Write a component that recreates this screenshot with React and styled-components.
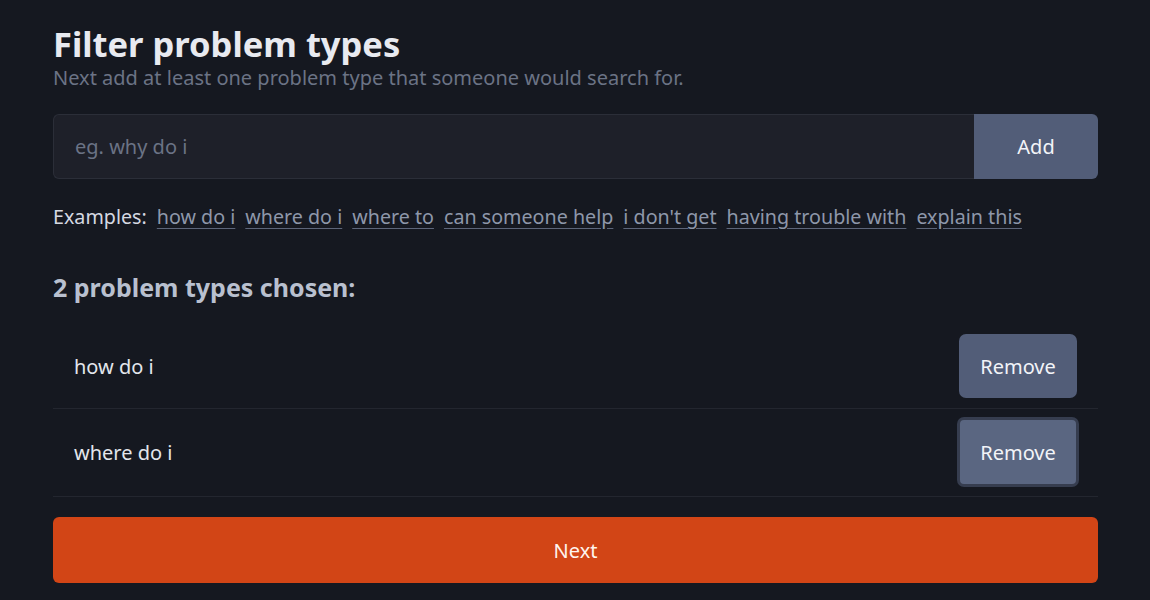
import React from 'react'
import styled, { createGlobalStyle } from 'styled-components'

const GlobalStyle = createGlobalStyle`
    html, body {
        margin: 0;
        padding: 0;
        background-color: #151820;
        font-family: "Noto Sans", "Open Sans", sans-serif;
    }
`

const Container = styled.div`
    padding: 22px 52px 20px 53px;
`

const Title = styled.h1`
    margin: 0;
    font-size: 34.5px;
    font-weight: 700;
    line-height: 44px;
    color: #e8eaf0;
`

const Subtitle = styled.p`
    margin: 0;
    font-size: 20px;
    line-height: 24px;
    color: #6b7385;
`

const InputRow = styled.div`
    display: flex;
    margin-top: 24px;
    height: 65px;
`

const Input = styled.input`
    flex: 1;
    min-width: 0;
    box-sizing: border-box;
    background-color: #1e2029;
    border: 1px solid #2b2e38;
    border-right: none;
    border-radius: 6px 0 0 6px;
    padding: 0 21px;
    font-family: inherit;
    font-size: 20px;
    color: #e5e7eb;
    outline: none;

    &::placeholder {
        color: #6b7385;
    }
`

const Button = styled.button`
    border: none;
    background-color: #525d78;
    color: #f2f4f8;
    font-family: inherit;
    font-size: 20px;
    cursor: pointer;
`

const AddButton = styled(Button)`
    width: 124px;
    border-radius: 0 6px 6px 0;
`

const Examples = styled.div`
    display: flex;
    align-items: baseline;
    gap: 10px;
    margin-top: 24px;
    font-size: 19.7px;
    line-height: 28px;
`

const ExamplesLabel = styled.span`
    color: #d5d9e2;
`

const ExampleLink = styled.a`
    color: #8e97aa;
    text-decoration: underline;
    text-decoration-color: #5d6579;
    text-underline-offset: 4px;
    cursor: pointer;
`

const ChosenTitle = styled.h2`
    margin: 41px 0 0;
    font-size: 25px;
    font-weight: 700;
    line-height: 30px;
    color: #b9c0cf;
`

const List = styled.div`
    margin-top: 30px;
`

const Row = styled.div`
    display: flex;
    align-items: center;
    justify-content: space-between;
    padding: ${p => (p.$focused ? '8px 19px 9px 21px' : '2px 21px 10px 21px')};
    border-bottom: 1px solid #23262f;
`

const RowText = styled.span`
    font-size: 20px;
    color: #e3e6ec;
`

const RemoveButton = styled(Button)`
    width: ${p => (p.$focused ? '122px' : '118px')};
    height: ${p => (p.$focused ? '70px' : '64px')};
    border-radius: 7px;
    box-sizing: border-box;
    background-color: ${p => (p.$focused ? '#5a6681' : '#525d78')};
    border: ${p => (p.$focused ? '3px solid #363d4f' : 'none')};
`

const NextButton = styled(Button)`
    display: block;
    width: 100%;
    height: 66px;
    margin-top: 20px;
    border-radius: 6px;
    background-color: #d24516;
    color: #fff5ee;
`

const examples = ['how do i', 'where do i', 'where to', 'can someone help', "i don't get", 'having trouble with', 'explain this']
const chosen = ['how do i', 'where do i']

const App = () => {
  return (
    <Container>
        <GlobalStyle />
        <Title>Filter problem types</Title>
        <Subtitle>Next add at least one problem type that someone would search for.</Subtitle>
        <InputRow>
            <Input type="text" placeholder="eg. why do i" />
            <AddButton>Add</AddButton>
        </InputRow>
        <Examples>
            <ExamplesLabel>Examples:</ExamplesLabel>
            {examples.map(e => <ExampleLink key={e}>{e}</ExampleLink>)}
        </Examples>
        <ChosenTitle>{chosen.length} problem types chosen:</ChosenTitle>
        <List>
            {chosen.map((c, i) => (
                <Row key={c} $focused={i === 1}>
                    <RowText>{c}</RowText>
                    <RemoveButton $focused={i === 1}>Remove</RemoveButton>
                </Row>
            ))}
        </List>
        <NextButton>Next</NextButton>
    </Container>
  )
}

export default App
